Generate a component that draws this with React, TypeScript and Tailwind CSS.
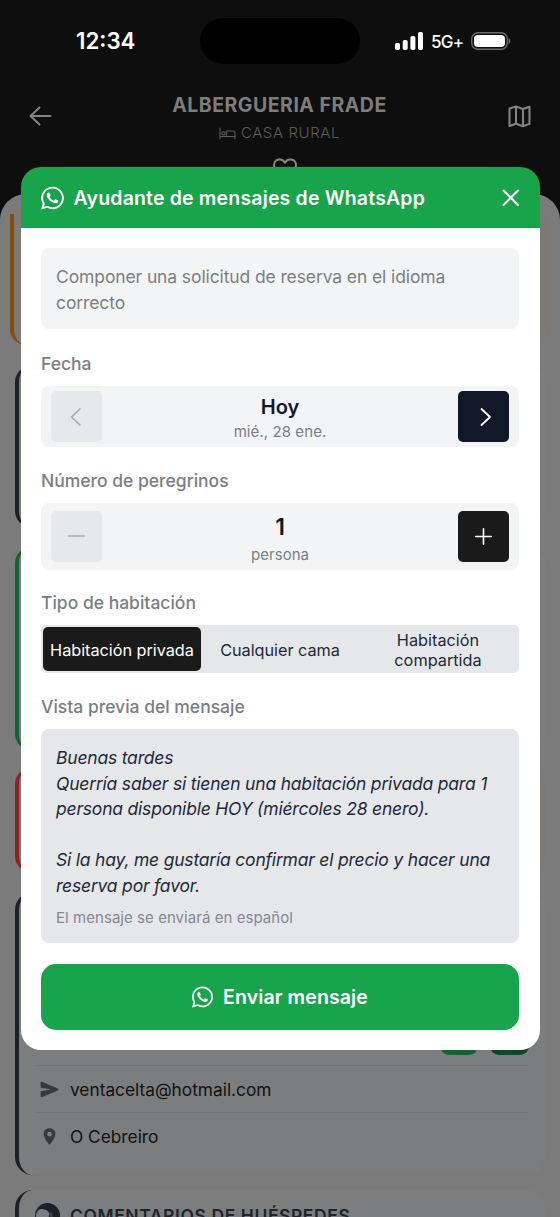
import type { ReactNode } from 'react';
import { FaWhatsapp } from 'react-icons/fa';
import { IoLocationSharp, IoSend } from 'react-icons/io5';

type IconProps = { className?: string; d: string; size: number; stroke: number };

function LineIcon({ className, d, size, stroke }: IconProps) {
  return (
    <svg
      className={className}
      width={size}
      height={size}
      viewBox={`0 0 ${size} ${size}`}
      fill="none"
      stroke="currentColor"
      strokeWidth={stroke}
      strokeLinecap="round"
      strokeLinejoin="round"
    >
      <path d={d} />
    </svg>
  );
}

function StatusBar() {
  return (
    <div className="flex h-[83px] shrink-0 items-start">
      <div className="mt-[25px] ml-[76px] w-[124px] text-[22.3px] leading-[32px] font-semibold text-white">12:34</div>
      <div className="mt-[18px] h-[46px] w-[160px] rounded-full bg-black" />
      <div className="mt-[29px] ml-[35px] flex h-[24px] items-center">
        <svg width="29" height="18" viewBox="0 0 29 18" fill="white">
          <rect x="0" y="11" width="5" height="7" rx="1.7" />
          <rect x="7.7" y="8" width="5" height="10" rx="1.7" />
          <rect x="15.4" y="4" width="5" height="14" rx="1.7" />
          <rect x="23" y="0" width="5" height="18" rx="1.7" />
        </svg>
        <span className="mt-[2px] ml-[7px] w-[34px] text-[17px] leading-[24px] font-medium tracking-[-0.7px] whitespace-nowrap text-white">
          5G+
        </span>
        <svg className="ml-[6px]" width="40" height="18" viewBox="0 0 40 18" fill="none">
          <rect x="0.75" y="0.75" width="35.5" height="16.5" rx="6" stroke="#6b6b6b" strokeWidth="1.4" />
          <rect x="3" y="3" width="31" height="12" rx="4" fill="white" />
          <path d="M37.6 6v6c1-.4 1.7-1.6 1.7-3s-.7-2.6-1.7-3z" fill="#6b6b6b" />
        </svg>
      </div>
    </div>
  );
}

function PageHeader() {
  return (
    <div className="flex h-[111px] shrink-0 items-start justify-between pr-[29px] pl-[28px] text-[#858585]">
      <LineIcon className="mt-[21px]" size={24} stroke={2} d="M22.5 12H2.5M11.500 3.500 2.500 12l9 8.500" />
      <div className="flex flex-col items-center pt-[8px]">
        <h1 className="text-[19.5px] leading-[29px] font-bold tracking-[0.5px] text-[#7d7d7d]">ALBERGUERIA FRADE</h1>
        <div className="flex h-[26px] items-center gap-[5px] text-[15px] font-light tracking-[0.6px] text-[#5c5c5c]">
          <LineIcon
            size={17}
            stroke={1.1}
            d="M1 3v11M1 11.5h15M16 14V8a2 2 0 0 0-2-2H7.500v5.500M2.900 8.400a1.600 1.600 0 1 0 3.200 0 1.600 1.600 0 1 0-3.200 0"
          />
          <span>CASA RURAL</span>
        </div>
        <LineIcon
          className="mt-[11px] ml-[10px]"
          size={26}
          stroke={2}
          d="M13 22S2 15.500 2 8a5.800 5.800 0 0 1 11-2.300A5.800 5.800 0 0 1 24 8c0 7.500-11 14-11 14z"
        />
      </div>
      <LineIcon
        className="mt-[21px]"
        size={24}
        stroke={2}
        d="M2.500 4.500 9 2.500l7 2.500 6.500-2.300v17.200L16 22.200l-7-2.500-6.500 2.300zM9 2.500v17.200M16 5v17.200"
      />
    </div>
  );
}

function ContactRow({ icon, text }: { icon: ReactNode; text: string }) {
  return (
    <div className="flex h-[47px] items-center border-t border-[#747577] pt-px pl-[4px]">
      <span className="flex w-[30px] text-[#36393e]">{icon}</span>
      <span className="text-[17.3px] text-[#111111]">{text}</span>
    </div>
  );
}

function Page() {
  return (
    <div className="flex h-full flex-col overflow-hidden bg-[#0e0e0e]">
      <StatusBar />
      <PageHeader />
      <main className="flex shrink-0 flex-col rounded-t-[26px] bg-[#7b7b7b] pt-[20px]">
        <div className="mr-[10px] ml-[10px] h-[131px] shrink-0 rounded-b-[16px] border-l-4 border-[#854d09] bg-[#7c7976]" />
        <div className="mt-[21px] mr-[15px] ml-[15px] h-[161px] shrink-0 rounded-[16px] border-l-4 border-[#1d2126] bg-[#7c7d7f]" />
        <div className="mt-[20px] mr-[15px] ml-[15px] h-[203px] shrink-0 rounded-[16px] border-l-4 border-[#116331] bg-[#7c7d7f]" />
        <div className="mt-[18px] mr-[15px] ml-[15px] h-[104px] shrink-0 rounded-[16px] border-l-4 border-[#8c2027] bg-[#7c7876]" />
        <div className="mt-[20px] mr-[15px] ml-[15px] flex h-[283px] shrink-0 flex-col rounded-[18px] border-l-4 border-[#1d2126] bg-[#7c7d7f] pr-[16px] pl-[17px]">
          <div className="flex h-[173px] items-end justify-end gap-[12px] pb-[10px]">
            <div className="h-[38px] w-[38px] rounded-[9px] bg-[#11662f]" />
            <div className="h-[38px] w-[39px] rounded-[9px] bg-[#0b4a26]" />
          </div>
          <ContactRow icon={<IoSend className="h-[19px] w-[19px]" />} text="ventacelta@hotmail.com" />
          <ContactRow icon={<IoLocationSharp className="h-[19px] w-[19px]" />} text="O Cebreiro" />
        </div>
        <div className="mt-[15px] mr-[15px] ml-[15px] flex h-[60px] shrink-0 items-start rounded-[18px] border-l-4 border-[#1d2126] bg-[#7c7d7f] pt-[12px] pl-[15px] text-[#202328]">
          <svg width="27" height="27" viewBox="0 0 27 27">
            <circle cx="13.5" cy="13.500" r="12.500" fill="#1d2126" />
            <path d="M4.500 18a6 6 0 0 1 5.500-10.500c3 .2 5 2 5.500 4.500l-1.500 5z" fill="#7c7d7f" />
            <path d="M16.500 9.500a7 7 0 0 1 1.500 8l-3 2z" fill="#7c7d7f" opacity="0.35" />
          </svg>
          <h2 className="mt-px ml-[9px] text-[17.5px] leading-[26px] font-semibold tracking-[0.57px]">
            COMENTARIOS DE HUÉSPEDES
          </h2>
        </div>
      </main>
    </div>
  );
}

function FieldLabel({ children }: { children: ReactNode }) {
  return <div className="mb-[9px] h-[27px] text-[17.5px] leading-[27px] font-medium text-[#7b7e84]">{children}</div>;
}

function MessageDialog() {
  return (
    <div role="dialog" className="absolute top-[167px] left-[20.5px] flex h-[883px] w-[519px] flex-col">
      <header className="flex h-[61px] shrink-0 items-center rounded-t-[20px] bg-[#17a44a] pr-[17px] pl-[20px] text-white">
        <FaWhatsapp className="h-[26px] w-[23px]" />
        <h2 className="ml-[10px] flex-1 pt-[2px] text-[19.5px] font-semibold tracking-[0.17px] whitespace-nowrap">
          Ayudante de mensajes de WhatsApp
        </h2>
        <LineIcon size={24} stroke={2.1} d="m4.500 4.500 14.500 14.500M19 4.500 4.500 19" />
      </header>
      <div className="flex flex-1 flex-col rounded-b-[20px] bg-white px-[20.5px] pt-[20px]">
        <p className="h-[81px] rounded-[8px] bg-[#f3f4f6] px-[15px] pt-[16px] text-[17.5px] leading-[25.5px] tracking-[-0.11px] text-[#7b7e84]">
          Componer una solicitud de reserva en el idioma correcto
        </p>

        <div className="mt-[21px]">
          <FieldLabel>Fecha</FieldLabel>
        </div>
        <div className="flex h-[61px] items-center justify-between rounded-[8px] bg-[#f3f4f6] px-[10px]">
          <button className="flex h-[51px] w-[51px] items-center justify-center rounded-[5px] bg-[#e6e8eb] text-[#aaaaac]">
            <LineIcon size={22} stroke={1.7} d="m14 3-8.500 8 8.500 8" />
          </button>
          <div className="flex flex-col items-center pt-[5px]">
            <span className="text-[20px] leading-[26px] font-semibold text-[#111827]">Hoy</span>
            <span className="text-[15px] leading-[24px] tracking-[0.08px] text-[#7b7e84]">mié., 28 ene.</span>
          </div>
          <button className="flex h-[51px] w-[51px] items-center justify-center rounded-[5px] bg-[#111827] text-white">
            <LineIcon size={22} stroke={1.8} d="m8.500 3 8.500 8-8.500 8" />
          </button>
        </div>

        <div className="mt-[20px]">
          <FieldLabel>Número de peregrinos</FieldLabel>
        </div>
        <div className="flex h-[67px] items-center justify-between rounded-[8px] bg-[#f3f4f6] px-[10px]">
          <button className="flex h-[51px] w-[51px] items-center justify-center rounded-[5px] bg-[#e6e8eb] text-[#aaaaac]">
            <LineIcon size={21} stroke={1.6} d="M2.800 10h15.400" />
          </button>
          <div className="flex flex-col items-center pt-[7px]">
            <span className="text-[23px] leading-[29px] font-semibold text-[#111827]">1</span>
            <span className="text-[15px] leading-[26px] tracking-[0.05px] text-[#7b7e84]">persona</span>
          </div>
          <button className="flex h-[51px] w-[51px] items-center justify-center rounded-[5px] bg-[#1a1a1a] text-white">
            <LineIcon size={21} stroke={1.6} d="M2.800 10.500h15.400M10.500 2.800v15.400" />
          </button>
        </div>

        <div className="mt-[19px]">
          <FieldLabel>Tipo de habitación</FieldLabel>
        </div>
        <div className="flex h-[48px] items-stretch rounded-[5px] bg-[#e5e7eb] p-[2px] text-center text-[16.3px] leading-[20px] text-[#1f2937]">
          <button className="w-[158px] rounded-[5px] bg-[#1a1a1a] pt-[2px] tracking-[-0.04px] whitespace-nowrap text-white">
            Habitación privada
          </button>
          <button className="w-[158px] pt-[2px] tracking-[-0.05px] whitespace-nowrap">Cualquier cama</button>
          <button className="w-[158px] px-[20px] pt-px">Habitación compartida</button>
        </div>

        <div className="mt-[20px]">
          <FieldLabel>Vista previa del mensaje</FieldLabel>
        </div>
        <div className="flex h-[214px] flex-col rounded-[8px] bg-[#e5e7eb] px-[15px] pt-[16px]">
          <p className="text-[17.5px] leading-[25.5px] tracking-[-0.2px] whitespace-pre text-[#1f2937] italic">
            {
              'Buenas tardes\nQuerría saber si tienen una habitación privada para 1\npersona disponible HOY (miércoles 28 enero).\n\nSi la hay, me gustaría confirmar el precio y hacer una\nreserva por favor.'
            }
          </p>
          <p className="mt-[8px] text-[15px] leading-[24px] tracking-[0.05px] text-[#85888e]">
            El mensaje se enviará en español
          </p>
        </div>

        <button className="mt-[21px] flex h-[66px] items-center justify-center gap-[10px] rounded-[15px] bg-[#17a44a] text-[19.5px] font-semibold tracking-[0.1px] text-white">
          <FaWhatsapp className="h-[24px] w-[21px]" />
          <span className="pt-px">Enviar mensaje</span>
        </button>
      </div>
    </div>
  );
}

export default function App() {
  return (
    <div className="relative h-[1217px] w-[560px] overflow-hidden font-['Inter',sans-serif]">
      <Page />
      <MessageDialog />
    </div>
  );
}
